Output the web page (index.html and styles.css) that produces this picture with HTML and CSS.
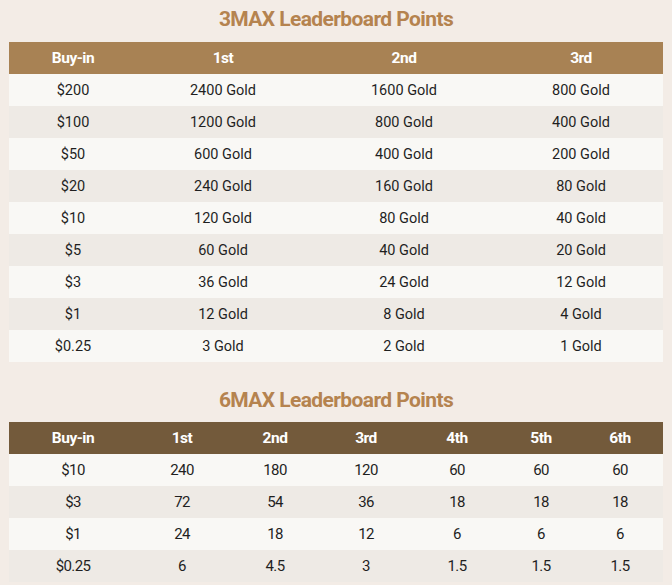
FILE: index.html
```html
<!DOCTYPE html>
<html>
<head>
<meta charset="utf-8">
<link rel="stylesheet" href="styles.css">
</head>
<body>
<div class="page">
  <h2 class="title">3MAX Leaderboard Points</h2>
  <table class="board board-3max">
    <colgroup><col class="c1"><col class="c2"><col class="c3"><col class="c4"></colgroup>
    <thead><tr><th>Buy-in</th><th>1st</th><th>2nd</th><th>3rd</th></tr></thead>
    <tbody>
      <tr><td>$200</td><td>2400 Gold</td><td>1600 Gold</td><td>800 Gold</td></tr>
      <tr><td>$100</td><td>1200 Gold</td><td>800 Gold</td><td>400 Gold</td></tr>
      <tr><td>$50</td><td>600 Gold</td><td>400 Gold</td><td>200 Gold</td></tr>
      <tr><td>$20</td><td>240 Gold</td><td>160 Gold</td><td>80 Gold</td></tr>
      <tr><td>$10</td><td>120 Gold</td><td>80 Gold</td><td>40 Gold</td></tr>
      <tr><td>$5</td><td>60 Gold</td><td>40 Gold</td><td>20 Gold</td></tr>
      <tr><td>$3</td><td>36 Gold</td><td>24 Gold</td><td>12 Gold</td></tr>
      <tr><td>$1</td><td>12 Gold</td><td>8 Gold</td><td>4 Gold</td></tr>
      <tr><td>$0.25</td><td>3 Gold</td><td>2 Gold</td><td>1 Gold</td></tr>
    </tbody>
  </table>
  <h2 class="title title-second">6MAX Leaderboard Points</h2>
  <table class="board board-6max">
    <colgroup><col class="d1"><col class="d2"><col class="d3"><col class="d4"><col class="d5"><col class="d6"><col class="d7"></colgroup>
    <thead><tr><th>Buy-in</th><th>1st</th><th>2nd</th><th>3rd</th><th>4th</th><th>5th</th><th>6th</th></tr></thead>
    <tbody>
      <tr><td>$10</td><td>240</td><td>180</td><td>120</td><td>60</td><td>60</td><td>60</td></tr>
      <tr><td>$3</td><td>72</td><td>54</td><td>36</td><td>18</td><td>18</td><td>18</td></tr>
      <tr><td>$1</td><td>24</td><td>18</td><td>12</td><td>6</td><td>6</td><td>6</td></tr>
      <tr><td>$0.25</td><td>6</td><td>4.5</td><td>3</td><td>1.5</td><td>1.5</td><td>1.5</td></tr>
    </tbody>
  </table>
</div>
</body>
</html>
```
FILE: styles.css
```css
html, body {
  margin: 0;
  padding: 0;
  background: #f3ece6;
}
.page {
  padding: 0 9px;
  font-family: Roboto, "Liberation Sans", sans-serif;
}
.title {
  margin: 0;
  height: 42px;
  line-height: 38px;
  text-align: center;
  font-size: 21px;
  font-weight: 700;
  letter-spacing: -0.6px;
  color: #b5834f;
}
.title-second {
  margin-top: 20px;
  height: 40px;
  line-height: 37px;
}
.board {
  width: 654px;
  border-collapse: collapse;
  table-layout: fixed;
}
.board th {
  height: 32px;
  padding: 0;
  color: #ffffff;
  font-size: 15.5px;
  font-weight: 700;
  letter-spacing: -0.5px;
  text-align: center;
}
.board td {
  height: 32px;
  padding: 0;
  font-size: 14.5px;
  color: #1f1f1f;
  text-align: center;
}
.board tbody tr:nth-child(odd) { background: #f9f8f5; }
.board tbody tr:nth-child(even) { background: #eeeae5; }
.board-3max thead tr { background: #a88254; }
.board-6max thead tr { background: #735a3b; }
.board-6max td { letter-spacing: -0.6px; font-size: 15px; }
.c1 { width: 128px; }
.c2 { width: 172px; }
.c3 { width: 190px; }
.c4 { width: 164px; }
.d1 { width: 128px; }
.d2 { width: 90px; }
.d3 { width: 96px; }
.d4 { width: 86px; }
.d5 { width: 96px; }
.d6 { width: 72px; }
.d7 { width: 86px; }
```
